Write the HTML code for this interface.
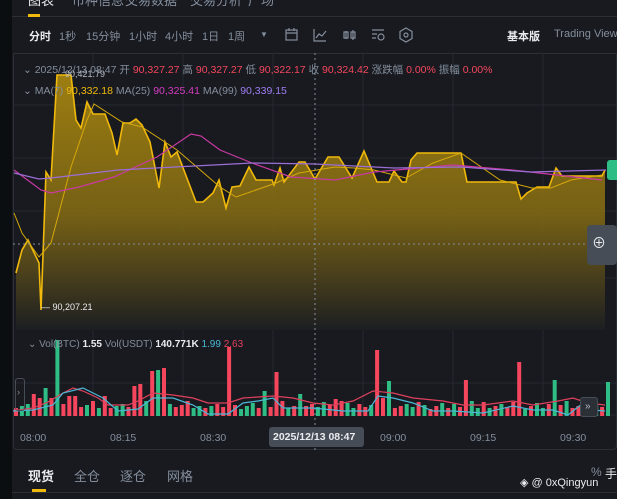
<!DOCTYPE html>
<html><head><meta charset="utf-8"><style>
*{margin:0;padding:0;box-sizing:border-box}
body{width:617px;height:499px;overflow:hidden;background:#181a20;font-family:"Liberation Sans","Noto Sans CJK SC",sans-serif;color:#848e9c;position:relative}
.a{position:absolute;white-space:nowrap}
</style></head><body>
<div class="a" style="left:0;top:0;width:12px;height:499px;background:#0b0e11"></div>
<div class="a" style="left:12px;top:0;width:605px;height:17px;background:#181a20;border-bottom:1px solid #2b2f36"></div>
<div class="a" style="left:28px;top:-10px;font-size:13px;color:#eaecef">图表</div>
<div class="a" style="left:72px;top:-10px;font-size:13px">币种信息</div>
<div class="a" style="left:125px;top:-10px;font-size:13px">交易数据</div>
<div class="a" style="left:190px;top:-10px;font-size:13px">交易分析</div>
<div class="a" style="left:248px;top:-10px;font-size:13px">广场</div>
<div class="a" style="left:28px;top:14px;width:12px;height:3px;background:#f0b90b"></div>
<div class="a" style="left:29px;top:28px;font-size:11px;color:#eaecef;font-weight:bold">分时</div>
<div class="a" style="left:59px;top:28px;font-size:11px">1秒</div>
<div class="a" style="left:86px;top:28px;font-size:11px">15分钟</div>
<div class="a" style="left:129px;top:28px;font-size:11px">1小时</div>
<div class="a" style="left:165px;top:28px;font-size:11px">4小时</div>
<div class="a" style="left:202px;top:28px;font-size:11px">1日</div>
<div class="a" style="left:228px;top:28px;font-size:11px">1周</div>
<div class="a" style="left:260px;top:30px;font-size:8px">▼</div>
<svg class="a" style="left:284px;top:27px" width="140" height="16" fill="none" stroke="#848e9c" stroke-width="1.2">
<rect x="2" y="3" width="11" height="10"/><path d="M2 6h11M5 1v3M10 1v3"/>
<path d="M30 2v12h12M32 11l3-4 3 2 4-5"/>
<path d="M62 4v8M60 5h4v6h-4zM69 3v10M67 5h4v6h-4z"/>
<path d="M88 3h12M88 7h5M88 11h4"/><circle cx="97" cy="10" r="3"/>
<path d="M122 1l6 3.5v7l-6 3.5-6-3.5v-7z"/><circle cx="122" cy="8" r="2"/>
</svg>
<div class="a" style="left:507px;top:28px;font-size:11px;color:#eaecef;font-weight:bold">基本版</div>
<div class="a" style="left:554px;top:28px;font-size:11px">Trading View</div>
<div class="a" style="left:13px;top:53px;width:604px;height:397px;background:#181a20;border:1px solid #2b2f36;border-radius:0 0 4px 4px"></div>
<svg class="a" style="left:13px;top:53px" width="604" height="397">
<defs><linearGradient id="g" x1="0" y1="0" x2="0" y2="1"><stop offset="0" stop-color="#a48310" stop-opacity="0.95"/><stop offset="0.55" stop-color="#7d6614" stop-opacity="0.92"/><stop offset="1" stop-color="#1c1e22" stop-opacity="1"/></linearGradient></defs>
<g stroke="#252830" stroke-width="1"><path d="M0 52H604M0 105H604M0 158H604M0 225H604M0 330H604M0 362H604M80 0V362M170 0V362M260 0V362M350 0V362M440 0V362M530 0V362"/></g>
<path fill="url(#g)" d="M3 220L9 197 15 187 26 210 28 257 33 119 38 127 44 22 58 22 63 67 68 75 74 49 80 61 92 61 99 80 104 102 110 70 117 70 123 66 129 72 137 89 146 135 152 89 158 104 164 99 183 149 190 149 200 140 206 127 213 155 219 134 227 133 236 114 243 127 259 127 261 132 267 115 271 129 286 109 292 109 302 126 315 104 326 104 339 125 351 98 364 129 376 129 381 118 389 129 393 129 398 107 404 100 448 100 454 129 503 129 508 146 514 140 524 134 536 134 543 115 549 123 589 123 592 117 L592 277 L3 277Z"/>
<path fill="none" stroke="#f0b90b" stroke-width="1.6" d="M3 220L9 197 15 187 26 210 28 257 33 119 38 127 44 22 58 22 63 67 68 75 74 49 80 61 92 61 99 80 104 102 110 70 117 70 123 66 129 72 137 89 146 135 152 89 158 104 164 99 183 149 190 149 200 140 206 127 213 155 219 134 227 133 236 114 243 127 259 127 261 132 267 115 271 129 286 109 292 109 302 126 315 104 326 104 339 125 351 98 364 129 376 129 381 118 389 129 393 129 398 107 404 100 448 100 454 129 503 129 508 146 514 140 524 134 536 134 543 115 549 123 589 123 592 117"/>
<path fill="none" stroke="#d6a80a" stroke-width="1" d="M1 160L9 180 26 204 38 190 58 114 74 67 81 51 109 69 129 74 164 97 207 134 223 144 263 130 286 120 322 114 341 115 361 117 393 125 420 110 448 100 487 127 519 135 538 135 558 127 589 122"/>
<path d="M1 117L28 137 38 140 66 134 101 124 144 104 178 81 188 83 207 97 239 110 278 124 322 127 361 119 440 112 499 117 589 127" fill="none" stroke="#c83aa2" stroke-width="1.2"/>
<path d="M1 120L26 126 38 125 105 117 239 110 302 111 381 115 448 114 518 119 593 117" fill="none" stroke="#9b6fd6" stroke-width="1.2"/>
<path d="M302 0V397" stroke="#848e9c" stroke-dasharray="2 3"/>
<path d="M0 191H575" stroke="#848e9c" stroke-dasharray="2 3"/>
<g id="vol"></g>
<path d="M0 358L20 355 35 349 50 340 60 335 70 338 85 345 95 352 115 352 125 348 140 340 160 342 180 345 195 350 215 350 230 345 260 343 280 345 300 350 320 352 340 348 360 338 380 340 400 345 430 348 450 352 470 352 500 348 520 352 545 348 560 345 575 350 592 352" fill="none" stroke="#e0415d" stroke-width="1.2"/>
<path d="M0 358L20 357 40 352 50 340 70 335 90 345 105 358 125 356 140 345 160 345 180 352 195 361 215 361 230 350 245 348 260 345 270 355 300 355 330 358 355 358 365 343 380 345 400 350 420 358 440 358 470 360 500 353 520 357 540 357 555 362 570 350 580 357 592 358" fill="none" stroke="#4ab8d6" stroke-width="1.2"/>
</svg>
<div class="a" style="left:607px;top:160px;width:20px;height:20px;background:#2ebd85;border-radius:3px"></div>
<div class="a" style="left:587px;top:225px;width:30px;height:40px;background:#474d57;border-radius:4px;color:#eaecef;font-size:14px;padding:8px 0 0 5px">⊕</div>
<div class="a" style="left:23px;top:62px;font-size:10.5px">⌄ 2025/12/13 08:47 <span>开</span> <span style="color:#f6465d">90,327.27</span> 高 <span style="color:#f6465d">90,327.27</span> 低 <span style="color:#f6465d">90,322.17</span> 收 <span style="color:#f6465d">90,324.42</span> 涨跌幅 <span style="color:#f6465d">0.00%</span> 振幅 <span style="color:#f6465d">0.00%</span></div>
<div class="a" style="left:65px;top:69px;font-size:9px;color:#b7bdc6">90,421.79</div>
<div class="a" style="left:23px;top:85px;font-size:10.5px">⌄ MA(7) <span style="color:#f0b90b">90,332.18</span> MA(25) <span style="color:#d63ac0">90,325.41</span> MA(99) <span style="color:#a07ef0">90,339.15</span></div>
<div class="a" style="left:41px;top:302px;font-size:9px;color:#eaecef">— 90,207.21</div>
<div class="a" style="left:28px;top:339px;font-size:10px">⌄ Vol(BTC) <b style="color:#eaecef">1.55</b> Vol(USDT) <b style="color:#eaecef">140.771K</b> <span style="color:#4ab8d6">1.99</span> <span style="color:#e0415d">2.63</span></div>
<div class="a" style="left:15px;top:378px;width:10px;height:33px;border:1px solid #474d57;border-radius:3px;font-size:9px;padding:8px 0 0 1px">›</div>
<div class="a" style="left:580px;top:397px;width:18px;height:20px;background:#2b2f36;border:1px solid #474d57;border-radius:3px;font-size:10px;padding:3px 0 0 4px;color:#b7bdc6">»</div>
<div class="a" style="left:20px;top:432px;font-size:10.5px">08:00</div>
<div class="a" style="left:110px;top:432px;font-size:10.5px">08:15</div>
<div class="a" style="left:200px;top:432px;font-size:10.5px">08:30</div>
<div class="a" style="left:380px;top:432px;font-size:10.5px">09:00</div>
<div class="a" style="left:470px;top:432px;font-size:10.5px">09:15</div>
<div class="a" style="left:560px;top:432px;font-size:10.5px">09:30</div>
<div class="a" style="left:269px;top:427px;width:95px;height:20px;background:#474d57;border-radius:3px;font-size:10.5px;color:#eaecef;font-weight:bold;padding:4px 0 0 4px">2025/12/13 08:47</div>
<div class="a" style="left:12px;top:455px;width:605px;height:44px;background:#181a20"></div>
<div class="a" style="left:28px;top:466px;font-size:13px;color:#eaecef;font-weight:bold">现货</div>
<div class="a" style="left:74px;top:466px;font-size:13px">全仓</div>
<div class="a" style="left:120px;top:466px;font-size:13px">逐仓</div>
<div class="a" style="left:167px;top:466px;font-size:13px">网格</div>
<div class="a" style="left:32px;top:489px;width:14px;height:3px;background:#f0b90b"></div>
<div class="a" style="left:12px;top:492px;width:605px;height:1px;background:#2b2f36"></div>
<div class="a" style="left:591px;top:465px;font-size:12px">%</div>
<div class="a" style="left:605px;top:465px;font-size:12px;color:#eaecef">手</div>
<div class="a" style="left:520px;top:476px;font-size:11px;color:#eaecef">◈ @ 0xQingyun</div>
<script>
var h=[],gr=[1,2,5,7,12,14,17,18,22,24,26,30,31,33,38,39,40,42,46,48,51,52,56,57,60,63,66,67,69,72,74,77,78,80,82,86,88,89,91,93,96,98,100];
var base=[8,10,12,9,14,11,7,10,13,8,12,9,11,15,8,10];
for(var i=0;i<101;i++)h.push(base[i%16]);
var sp={3:22,4:18,5:28,6:18,7:76,8:12,9:20,10:20,15:20,20:30,21:32,22:15,23:45,24:46,25:48,36:69,42:25,44:44,48:22,54:17,55:15,61:66,62:18,63:35,76:36,79:14,85:54,91:36,100:34};
for(var k in sp)h[k]=sp[k];
var g='';for(var i=0;i<101;i++){var x=1+i*5.92;g+='<rect x="'+x.toFixed(1)+'" y="'+(363-h[i])+'" width="4" height="'+h[i]+'" fill="'+(gr.indexOf(i)>=0?'#2ebd85':'#f6465d')+'"/>'}
document.getElementById('vol').innerHTML=g;
</script>
</body></html>
